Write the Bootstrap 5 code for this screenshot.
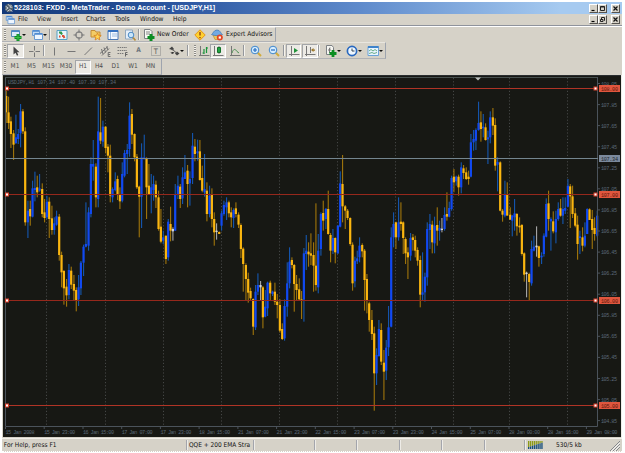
<!DOCTYPE html>
<html lang="en">
<head>
    <meta charset="UTF-8">
    <meta name="viewport" content="width=device-width, initial-scale=1.0">
    <title>MetaTrader - USDJPY,H1</title>
    <link href="https://cdn.jsdelivr.net/npm/bootstrap@5.3.0/dist/css/bootstrap.min.css" rel="stylesheet">
    <style>
        body {
            background: #fff;
            font-family: "DejaVu Sans Condensed", "DejaVu Sans", sans-serif;
            font-size: 6.6px;
            line-height: 1;
            color: #111;
        }
        .terminal {
            width: 620px;
            height: 450px;
            margin: 2px 0 0 2px;
            background: #d6d2c8;
        }
        .title-bar {
            height: 12px;
            padding: 0 2px 0 2px;
            background: linear-gradient(90deg, #123878 0%, #2c56a0 28%, #5f8bcc 58%, #a6caf0 90%);
            color: #fff;
            font: bold 7.1px/12px "Liberation Sans", sans-serif;
        }
        .menu-bar {
            height: 12px;
            padding: 0 2px 0 3px;
            border-bottom: 1px solid #8f939c;
            box-shadow: 0 1px 0 #fff;
        }
        .menu-items {
            display: grid;
            grid-template-columns: 19px 24px 25px 29px 25px 33px 20px;
            margin-left: 3px;
        }
        .win-btn {
            width: 9px;
            height: 9px;
            background: #d6d2c8;
            border: 1px solid;
            border-color: #fff #55534f #55534f #fff;
        }
        .win-btn svg { width: 7px; height: 7px; }
        .tool-row {
            display: grid;
            align-items: center;
            width: max-content;
            border-right: 1px solid #9ea4ae;
            border-bottom: 1px solid #b0b2b6;
        }
        .row-main {
            margin-top: 1px;
            height: 15px;
            grid-template-columns: 5px 21px 21px 4px 17px 17px 17px 17px 17px 5px 14px 35px 16px 18px 49px;
        }
        .row-draw {
            height: 17px;
            grid-template-columns: 5px 17px 19px 2px 17px 17px 17px 17px 17px 17px 17px 23px 5px 5px 13px 16px 17px 4px 18px 18px 3px 15px 1px 16px 4px 21px 21px 21px;
        }
        .row-period {
            height: 16px;
            grid-template-columns: 5px 16px 17px 17px 18px 16px 16px 17px 18px 17px 2px;
            color: #4c4c4c;
            text-align: center;
            font-size: 6.5px;
        }
        .row-draw, .row-main { border-top: 1px solid #e9e6df; }
        .tool-row svg { width: 12px; height: 12px; }
        .grip {
            width: 2px;
            height: 11px;
            margin-left: 2px;
            background: repeating-linear-gradient(#8c8a86 0 1px, #f4f2ec 1px 2px);
        }
        .tool-sep {
            width: 2px;
            height: 11px;
            border-left: 1px solid #94979c;
            border-right: 1px solid #f5f3ee;
        }
        .pressed {
            height: 14px;
            background: #eceae5;
            border: 1px solid;
            border-color: #a3a5a8 #fff #fff #a3a5a8;
        }
        .drop::after {
            content: "";
            border: 2px solid transparent;
            border-top-color: #111;
            border-bottom: 0;
        }
        .chart-pane { width: 619px; height: 363px; margin-left: 1px; }
        .chart-pane text { font-family: "Liberation Mono", monospace; font-size: 5.2px; }
        .status-bar {
            display: grid;
            grid-template-columns: 184px 67px 61px 42px 43px 42px 43px 40px 96px;
            height: 14px;
            border-top: 1px solid #f1efe9;
            border-bottom: 1px dotted #fff;
            font-size: 6.5px;
        }
        .pane-edge {
            height: 10px;
            border-left: 1px solid #a3a5ac;
            box-shadow: inset 1px 0 0 #eeece7;
        }
        .pane-text { padding-left: 2px; }
        .rate { margin-left: 11px; }
    </style>
</head>
<body class="overflow-hidden">
    <!-- icon set -->
    <svg class="d-none">
        <symbol id="i-app" viewBox="0 0 12 12"><circle cx="6" cy="6" r="5" fill="#52606c"/><path d="M2 4l3 2-3 2M5 1.5L7 4l2-1M4 10l3-2 3 2M7 5h3" stroke="#e8edf0" fill="none"/></symbol>
        <symbol id="i-newchart" viewBox="0 0 12 12"><path fill="#dceaf8" stroke="#568abb" d="M1.5 1.5h8v6h-8z"/><path stroke="#4b88ca" d="M2 2.5h7"/><path stroke="#0b8d22" stroke-width="3" d="M8 5v7M4.5 8.5h7"/><path stroke="#38bf48" d="M8 5.5v6M5 8.5h6"/></symbol>
        <symbol id="i-profiles" viewBox="0 0 12 12"><path fill="#c2dcf7" stroke="#6a9ad2" d="M1.5 1.5h7v5h-7z"/><path fill="#eef6ff" stroke="#6a9ad2" d="M3.5 4.5h8v6h-8z"/><path stroke="#4a86d0" stroke-width="1.500" d="M2 2h6M4 5h7"/></symbol>
        <symbol id="i-market" viewBox="0 0 12 12"><path fill="#e8f5fa" stroke="#55a0c4" d="M1 1.500h10v9H1z"/><path stroke="#2e9a4a" stroke-width="2" d="M3 3.500h2l1 2"/><path stroke="#dd5038" stroke-width="2" d="M6 7h1.500l1 2M3 7.500h1.500"/></symbol>
        <symbol id="i-navigator" viewBox="0 0 12 12"><circle cx="6" cy="6" r="3.200" fill="none" stroke="#808080" stroke-width="1.200"/><path stroke="#777" d="M6 .5v3.500M6 8v3.500M.5 6H4M8 6h3.500"/></symbol>
        <symbol id="i-favorite" viewBox="0 0 12 12"><path fill="#f3cc66" stroke="#c28b37" d="M1 1.500h4l1 1.500h4v5H1z"/><path fill="#ffd552" stroke="#d78222" stroke-width=".8" d="M7.500 4l1 2.300 2.700.2-2 1.700.7 2.800-2.400-1.500-2.400 1.500.7-2.800-2-1.700 2.700-.2z"/></symbol>
        <symbol id="i-terminal" viewBox="0 0 12 12"><path fill="#f5f9ff" stroke="#4a79b6" d="M1 1.500h10v9H1z"/><path stroke="#3571c0" stroke-width="2" d="M1 2h10"/><path stroke="#9bbbe0" d="M3.500 3v7M5 5h5M5 7h5"/></symbol>
        <symbol id="i-tester" viewBox="0 0 12 12"><path fill="#e5effa" stroke="#91a8be" d="M1.500 1h7v9h-7z"/><circle cx="7" cy="6" r="2.800" fill="#c9e5fa" stroke="#4a89c4"/><path stroke="#b38b3d" stroke-width="1.600" d="M9 8.500l2.500 3"/></symbol>
        <symbol id="i-order" viewBox="0 0 12 12"><path fill="#f8f8f4" stroke="#7d8185" d="M1.500.5H7l2 2v7H1.500z"/><path stroke="#888" d="M3 3h4M3 5h4"/><path stroke="#0b8d22" stroke-width="3" d="M8 5v7M4.500 8.500h7"/></symbol>
        <symbol id="i-warn" viewBox="0 0 12 12"><path fill="#ffd12e" stroke="#e69519" d="M6 .8L11.200 6 6 11.200.8 6z"/><path stroke="#9a4a14" stroke-width="1.500" d="M6 3v3.500M6 8v1.300"/></symbol>
        <symbol id="i-expert" viewBox="0 0 12 12"><path fill="#edc75b" stroke="#bc8e36" stroke-width=".7" d="M2 6h8l-2 4.500H4z"/><path fill="#72aae3" stroke="#3e78b6" stroke-width=".7" d="M.5 5.500C2 5 2.500 1 6 1s3.500 3.500 5.500 4.500c-3 1.500-8 1.500-11 0z"/><circle cx="8.800" cy="8.500" r="3" fill="#e24624"/><path fill="#fff" d="M7.700 7.400h2.200v2.200H7.700z"/></symbol>
        <symbol id="i-cursor" viewBox="0 0 12 12"><path fill="#444" d="M3.500 1.500v8l2-1.800 1.500 3 1.300-.7L7 7.200h2.500z"/></symbol>
        <symbol id="i-cross" viewBox="0 0 12 12"><path stroke="#777" d="M6.500 1v4.500M6.500 7.500V12M1 6.500h4.500M7.500 6.500H12"/></symbol>
        <symbol id="i-vline" viewBox="0 0 12 12"><path stroke="#777" d="M6.500 2.500v8"/></symbol>
        <symbol id="i-hline" viewBox="0 0 12 12"><path stroke="#777" d="M2.500 6.500h8"/></symbol>
        <symbol id="i-trend" viewBox="0 0 12 12"><path stroke="#777" d="M2.500 10l7.500-7.500"/></symbol>
        <symbol id="i-channel" viewBox="0 0 12 12"><path stroke="#707070" fill="none" d="M1 8.500l8-7M3 10.500l7-7M2.500 4l1.500 5M5 2.500l1.500 5M7.500 1.500L9 5M11.500 7.500H9.200v4h2.300M9.200 9.500h2"/></symbol>
        <symbol id="i-fibo" viewBox="0 0 12 12"><path stroke="#777" stroke-dasharray="1.500 .7" d="M1.500 2.500H11M1.500 5.500H11M1.500 8.500H8"/><path stroke="#666" fill="none" d="M11.500 7.500H9.500v4M9.500 9.500h2"/></symbol>
        <symbol id="i-label" viewBox="0 0 12 12"><path fill="none" stroke="#888" stroke-dasharray="1 1" d="M1.500 1.500h9v9h-9z"/></symbol>
        <symbol id="i-arrows" viewBox="0 0 12 12"><path fill="#444" d="M1 4l3-2.500L6 4 4.500 5.500 3 4.500zM7 8.500l2-2 2.500 2L9 10.500z"/><path stroke="#555" d="M4 4l4 3.500M3 7.500l1.500 1.500L6 7"/></symbol>
        <symbol id="i-bars" viewBox="0 0 12 12"><path stroke="#777" d="M2.500 1v9.500M1 10.500h10.500"/><path stroke="#19943a" stroke-width="1.200" d="M6 4v5M4.500 8H6M8.500 2v6M8.500 3H10"/></symbol>
        <symbol id="i-candles" viewBox="0 0 12 12"><path stroke="#777" d="M2.500 1v9.500M1 10.500h10.500M7 1v8"/><path fill="#22a342" stroke="#13732b" d="M5.500 2.500h3v5h-3z"/></symbol>
        <symbol id="i-line" viewBox="0 0 12 12"><path stroke="#777" d="M2.500 1v9.500M1 10.500h10.500"/><path fill="none" stroke="#4b8f53" d="M3 8c1.500-5 3.500-4 5-1.500L10 8"/></symbol>
        <symbol id="i-zoomin" viewBox="0 0 12 12"><path stroke="#d2ac3c" stroke-width="2" d="M7.500 7.500l3.500 3.500"/><circle cx="5" cy="5" r="3.800" fill="#d5edff" stroke="#3f86cc"/><path stroke="#246bc0" stroke-width="1.200" d="M3 5h4M5 3v4"/></symbol>
        <symbol id="i-zoomout" viewBox="0 0 12 12"><path stroke="#d2ac3c" stroke-width="2" d="M7.500 7.500l3.500 3.500"/><circle cx="5" cy="5" r="3.800" fill="#d5edff" stroke="#3f86cc"/><path stroke="#246bc0" stroke-width="1.200" d="M3 5h4"/></symbol>
        <symbol id="i-scroll" viewBox="0 0 12 12"><path stroke="#777" d="M3.500 1v10M1 9.500h10.500"/><path fill="#20923a" d="M6 3l4 2.500L6 8z"/></symbol>
        <symbol id="i-shift" viewBox="0 0 12 12"><path stroke="#777" d="M2.500 1v10M1 9.500h10.500M6.500 2v6"/><path fill="#9a7527" d="M7 5l2.500-2v1.500H11v1.200H9.500V7z"/></symbol>
        <symbol id="i-indicator" viewBox="0 0 12 12"><path fill="#f5f5f0" stroke="#7d8185" d="M1.500.5H7l1.500 2v7h-7z"/><path fill="none" stroke="#777" d="M5.500 3h-1v5M3 5h3"/><path stroke="#0b8d22" stroke-width="2.800" d="M8 5v7M4.500 8.500h7"/></symbol>
        <symbol id="i-clock" viewBox="0 0 12 12"><circle cx="6" cy="6" r="4.600" fill="#eff7ff" stroke="#2868bf" stroke-width="1.700"/><path fill="none" stroke="#345" d="M6 3.500V6h2.500"/></symbol>
        <symbol id="i-template" viewBox="0 0 12 12"><path fill="#e9f5ff" stroke="#6ba3d8" d="M1 1.500h10.500v9H1z"/><path stroke="#3e83cb" stroke-width="2" d="M1 2h10.500"/><path fill="none" stroke="#6aae8a" d="M2 6l2-1.500L6 6l2-1.500L10 6M2 8.500l3-1 2 1 3-1"/></symbol>
        <symbol id="i-min" viewBox="0 0 7 7"><path stroke="#000" stroke-width="1.200" d="M1.500 5.500h3"/></symbol>
        <symbol id="i-max" viewBox="0 0 7 7"><path fill="none" stroke="#222" d="M1.500 1.500h4v4h-4zM1.500 2h4"/></symbol>
        <symbol id="i-restore" viewBox="0 0 7 7"><path fill="none" stroke="#222" d="M2.500 3V1.500h3v3H5M1.500 3.500h2.500v2H1.500z"/></symbol>
        <symbol id="i-close" viewBox="0 0 7 7"><path stroke="#111" stroke-width="1.200" d="M1.500 1.500l4 4M5.500 1.500l-4 4"/></symbol>
    </svg>

    <div class="terminal d-flex flex-column">
        <div class="title-bar d-flex align-items-center">
            <svg width="10" height="10"><use href="#i-app"/></svg>
            <span class="text-nowrap" id="caption">5228103: FXDD - MetaTrader - Demo Account - [USDJPY,H1]</span>
            <div class="d-flex ms-auto">
                <span class="win-btn d-flex"><svg><use href="#i-min"/></svg></span>
                <span class="win-btn d-flex me-1"><svg><use href="#i-max"/></svg></span>
                <span class="win-btn d-flex"><svg><use href="#i-close"/></svg></span>
            </div>
        </div>

        <div class="menu-bar d-flex align-items-center">
            <svg width="10" height="10"><use href="#i-profiles"/></svg>
            <div class="menu-items">
                <span>File</span><span>View</span><span>Insert</span><span>Charts</span><span>Tools</span><span>Window</span><span>Help</span>
            </div>
            <div class="d-flex ms-auto">
                <span class="win-btn d-flex"><svg><use href="#i-min"/></svg></span>
                <span class="win-btn d-flex me-1"><svg><use href="#i-restore"/></svg></span>
                <span class="win-btn d-flex"><svg><use href="#i-close"/></svg></span>
            </div>
        </div>

        <div class="tool-row row-main">
            <i class="grip"></i>
            <span class="drop d-flex align-items-center justify-content-center"><svg><use href="#i-newchart"/></svg></span>
            <span class="drop d-flex align-items-center justify-content-center"><svg><use href="#i-profiles"/></svg></span>
            <i class="tool-sep"></i>
            <span class="d-flex justify-content-center"><svg><use href="#i-market"/></svg></span>
            <span class="d-flex justify-content-center"><svg><use href="#i-navigator"/></svg></span>
            <span class="d-flex justify-content-center"><svg><use href="#i-favorite"/></svg></span>
            <span class="d-flex justify-content-center"><svg><use href="#i-terminal"/></svg></span>
            <span class="d-flex justify-content-center"><svg><use href="#i-tester"/></svg></span>
            <i class="tool-sep"></i>
            <span class="d-flex"><svg><use href="#i-order"/></svg></span>
            <span class="text-nowrap">New Order</span>
            <span class="d-flex justify-content-center"><svg><use href="#i-warn"/></svg></span>
            <span class="d-flex justify-content-center"><svg><use href="#i-expert"/></svg></span>
            <span class="text-nowrap">Expert Advisors</span>
        </div>

        <div class="tool-row row-draw">
            <i class="grip"></i>
            <span class="pressed d-flex align-items-center justify-content-center"><svg><use href="#i-cursor"/></svg></span>
            <span class="d-flex justify-content-center"><svg><use href="#i-cross"/></svg></span>
            <i class="tool-sep"></i>
            <span class="d-flex justify-content-center"><svg><use href="#i-vline"/></svg></span>
            <span class="d-flex justify-content-center"><svg><use href="#i-hline"/></svg></span>
            <span class="d-flex justify-content-center"><svg><use href="#i-trend"/></svg></span>
            <span class="d-flex justify-content-center"><svg><use href="#i-channel"/></svg></span>
            <span class="d-flex justify-content-center"><svg><use href="#i-fibo"/></svg></span>
            <span class="text-center text-secondary fw-bold">A</span>
            <span class="d-flex justify-content-center"><svg viewBox="0 0 12 12"><use href="#i-label"/><text x="3.700" y="9" font-size="7.500" fill="#555">T</text></svg></span>
            <span class="drop d-flex align-items-center justify-content-center"><svg><use href="#i-arrows"/></svg></span>
            <i class="tool-sep"></i>
            <i class="grip"></i>
            <span class="d-flex justify-content-center"><svg><use href="#i-bars"/></svg></span>
            <span class="pressed d-flex align-items-center justify-content-center"><svg><use href="#i-candles"/></svg></span>
            <span class="d-flex justify-content-center"><svg><use href="#i-line"/></svg></span>
            <i class="tool-sep"></i>
            <span class="d-flex justify-content-center"><svg><use href="#i-zoomin"/></svg></span>
            <span class="d-flex justify-content-center"><svg><use href="#i-zoomout"/></svg></span>
            <i class="tool-sep"></i>
            <span class="pressed d-flex align-items-center justify-content-center"><svg><use href="#i-scroll"/></svg></span>
            <i></i>
            <span class="pressed d-flex align-items-center justify-content-center"><svg><use href="#i-shift"/></svg></span>
            <i class="tool-sep"></i>
            <span class="drop d-flex align-items-center justify-content-center"><svg><use href="#i-indicator"/></svg></span>
            <span class="drop d-flex align-items-center justify-content-center"><svg><use href="#i-clock"/></svg></span>
            <span class="drop d-flex align-items-center justify-content-center"><svg><use href="#i-template"/></svg></span>
        </div>

        <div class="tool-row row-period">
            <i class="grip"></i>
            <span>M1</span><span>M5</span><span>M15</span><span>M30</span>
            <span class="pressed d-flex align-items-center justify-content-center">H1</span>
            <span>H4</span><span>D1</span><span>W1</span><span>MN</span><i></i>
        </div>

        <svg class="chart-pane d-block mt-auto" id="chart" viewBox="3 75 619 363"></svg>

        <div class="status-bar align-items-center">
            <span class="text-nowrap">&nbsp;For Help, press F1</span>
            <span class="pane-edge pane-text d-flex align-items-center text-nowrap">QQE + 200 EMA Stra</span>
            <i class="pane-edge"></i><i class="pane-edge"></i><i class="pane-edge"></i><i class="pane-edge"></i><i class="pane-edge"></i><i class="pane-edge"></i>
            <span class="pane-edge d-flex align-items-center">
                <svg width="20" height="10" id="traffic"></svg>
                <span class="rate">530/5 kb</span>
                <svg class="ms-auto" width="11" height="11"><path stroke="#85878a" d="M1 11L11 1M4 11l7-7M7 11l4-4"/><path stroke="#fff" d="M2.500 11L11 2.500M5.500 11L11 5.500"/></svg>
            </span>
        </div>
    </div>

    <script src="https://cdn.jsdelivr.net/npm/bootstrap@5.3.0/dist/js/bootstrap.bundle.min.js"></script>
    <script>
        // Bars: x, high, low, body top, body bottom, kind (u = up, d = down, n = flat).
        // Units are thirds of a pixel, each block has its own left origin.
        const blocks = [
            [0, `18 50 147 66 115 d;25 68 165 115 147 d;32 128 222 142 180 d;40 168 258 178 212 d;47 122 210 190 207 u;54 165 210 180 195 u;61 90 220 112 178 u;68 105 180 112 172 d;75 160 455 172 445 d;83 380 492 410 445 u;90 380 455 405 427 d;97 320 430 343 428 u;104 293 382 342 348 u;111 305 370 340 355 d;118 300 353 343 350 u;126 328 430 345 420 d;133 375 445 415 432 d;140 365 435 383 430 u;147 370 492 383 435 d;155 395 482 433 468 d;162 430 482 448 468 u;169 410 455 427 452 u;177 420 560 428 543 d;184 533 640 543 595 d;191 588 692 591 643 d;199 615 698 638 664 d;206 570 676 588 663 u;213 578 645 590 632 d;221 603 680 630 650 d;228 640 712 648 678 d;235 603 696 640 676 u;242 561 663 566 643 u;250 512 606 518 566 u;257 385 520 510 518 u;265 400 530 415 515 u;272 250 430 270 420 u;279 198 320 270 278 u;287 268 400 278 370 d;294 68 400 172 375 u;301 72 210 175 200 d;308 140 218 158 203 u;316 157 238 158 222 d;323 210 295 218 245 d;330 212 385 245 365 d;337 340 385 345 370 u;345 295 352 322 348 u;352 305 378 315 362 d;359 340 405 360 382 d;366 265 385 300 380 u;373 228 310 237 305 u;381 210 300 228 240 u;388 85 248 125 225 u;395 105 210 120 182 d;403 178 262 180 250 d;410 240 345 248 340 d;417 335 490 338 368 d;424 208 462 250 368 u;432 182 250 250 256 u;439 250 435 252 340 d;446 270 355 335 360 d`],
            [450, `3 300 418 340 360 u;10 305 380 330 348 u;17 320 402 332 370 d;25 350 470 370 465 d;32 405 508 458 503 d;39 470 510 490 500 u;47 485 570 485 555 d;54 435 560 443 550 u;61 398 502 450 470 d;68 460 500 465 472 n;75 330 470 360 470 u;83 305 375 335 362 u;90 330 402 338 375 d;97 280 390 310 373 u;104 243 315 295 315 u;112 273 400 290 330 d;119 292 395 315 328 u;127 177 330 215 312 u;134 195 262 218 240 d;142 197 260 232 238 u;149 198 320 232 318 d;156 275 355 312 350 d;163 240 368 345 355 u;170 325 442 350 420 d;178 335 430 365 420 u;185 343 460 362 435 d;192 415 515 435 475 d;199 448 497 470 474 n;207 472 480 474 480 d;214 410 470 418 455 u;221 380 425 393 420 u;229 370 438 385 400 u;236 380 430 385 418 d;243 400 460 415 430 d;250 403 462 408 432 u;257 385 430 403 420 d;265 415 462 422 452 d;272 448 552 453 525 d;279 520 653 524 570 d;287 568 678 573 615 d;294 596 686 615 656 d;301 641 680 651 673 d;309 673 783 675 758 d;316 633 768 653 760 u;323 598 663 633 653 u;331 621 678 633 640 n;338 636 763 640 730 d;345 648 730 698 728 u;352 623 726 626 703 u;360 620 678 626 658 d;367 650 666 653 660 u;374 626 693 653 683 d;381 660 733 683 693 d;389 676 776 693 770 d;396 748 798 765 795 d;403 676 800 696 793 u;411 565 728 628 698 u;418 520 643 563 628 u;425 550 583 558 573 d;432 570 713 573 630 d;439 603 678 630 648 d;447 613 678 646 676 d;454 651 735 676 681 d;461 522 743 538 677 u;468 483 588 530 540 u;475 505 578 533 541 d`],
            [900, `32 478 573 538 545 d;40 505 653 543 575 d;47 388 650 575 633 d;54 480 658 530 640 u;62 415 545 420 525 u;69 380 470 417 440 d;77 402 465 405 435 u;84 350 482 405 480 d;91 477 565 483 530 d;98 465 540 492 530 u;105 490 568 492 535 d;113 453 540 455 538 u;120 292 460 328 458 u;127 243 445 330 397 d;135 393 465 397 410 d;142 405 438 410 432 d;150 430 515 432 510 d;157 505 650 512 628 d;164 548 640 560 622 u;171 530 570 553 562 u;178 490 565 515 550 u;186 508 550 513 532 d;193 525 710 530 618 d;200 600 718 615 680 d;207 683 773 688 738 d;215 708 798 738 780 d;222 758 1010 778 898 d;229 823 933 843 898 u;236 738 848 765 846 u;243 748 873 768 863 d;251 828 978 866 893 d;258 798 918 821 890 u;265 696 846 760 820 u;273 460 760 490 758 u;280 415 520 450 490 u;287 443 525 445 490 d;295 370 500 445 490 u;302 385 470 443 450 d;309 442 540 445 492 d;316 490 570 495 538 d;323 520 615 535 550 d;331 477 560 492 545 u;338 480 530 490 498 d;345 485 550 498 530 d;352 520 575 528 560 d;360 545 700 558 662 d;367 535 680 655 662 u;374 596 683 608 655 u;381 445 635 465 610 u;389 420 525 450 468 u;396 440 538 452 505 d;403 428 538 455 508 u;411 400 515 453 470 d;418 440 500 462 470 u;425 432 475 464 468 n;433 400 470 423 465 u;440 355 440 420 428 d;447 383 430 402 428 u`],
            [1350, `4 305 410 312 405 u;11 285 355 308 325 d;18 305 335 308 322 u;25 302 365 308 340 d;33 265 358 280 340 u;40 273 315 283 297 d;48 280 318 295 315 d;55 290 332 308 315 d;62 180 310 205 308 u;70 168 230 195 205 u;77 163 228 168 200 u;85 83 170 147 168 u;92 112 203 145 165 d;99 120 190 158 163 u;106 148 200 160 198 d;113 170 270 190 196 u;120 112 208 130 190 u;128 102 183 130 155 d;135 133 290 153 275 d;142 250 352 264 272 u;150 262 412 265 410 d;157 405 443 410 422 d;164 320 430 360 425 u;171 325 415 363 425 d;180 400 437 422 437 d;186 423 487 425 440 u;193 375 470 418 430 u;200 417 485 420 457 d;208 430 476 455 460 d;215 450 545 453 540 d;222 535 623 538 602 d;229 593 670 596 600 n;237 596 680 600 624 d;244 500 635 525 628 u;251 485 532 518 530 u;259 457 548 515 520 n;266 515 578 517 552 d;274 535 570 545 550 u;281 478 548 485 540 u;288 373 490 390 488 u;295 350 470 388 435 d;302 430 530 435 442 u;309 412 478 442 472 d;317 410 508 435 475 u;324 385 440 405 435 u;331 375 428 403 425 d;338 370 450 405 425 u;345 370 420 402 410 u;353 315 400 335 398 u;360 330 462 337 367 d;367 335 432 367 420 d;375 402 460 418 455 d;382 425 557 452 510 d;389 470 540 487 492 u;397 460 532 490 515 d;404 445 520 485 515 u;411 403 480 405 480 u;418 403 430 406 438 d;426 408 525 435 468 d;433 430 500 462 480 d;441 410 490 425 485 u`]
        ];
        const body = { u: '#1149f2', d: '#fbb610', n: '#d8d8d8' };
        const wick = { u: '#1557b0', d: '#a0760c', n: '#a8a8a8' };

        let out = '<rect x="3" y="75" width="618" height="362" fill="#171814"/>';
        out += '<path d="M3 75.500H621" stroke="#292d2f"/><path d="M5 77.500H597.500" stroke="#47504f"/>';

        // Vertical grid
        [46.5, 105.5, 163.5, 221.5, 279.5, 337.5, 395.5, 453.5, 509.5, 567.5].forEach(x => {
            out += `<path d="M${x} 78V426" stroke="#444645" stroke-dasharray="1.200 2"/>`;
        });

        // Candles
        blocks.forEach(([left, rows]) => rows.split(';').forEach(row => {
            const [x, high, low, top, bottom, kind] = row.split(' ');
            const cx = (left + Number(x)) / 3 + .2;
            const y = v => 74 + v / 3;
            out += `<rect x="${(cx - .5).toFixed(2)}" y="${y(high)}" width="1.100" height="${(low - high) / 3}" fill="${wick[kind]}"/>`;
            out += `<rect x="${(cx - 1.1).toFixed(2)}" y="${y(top)}" width="2.200" height="${Math.max(1, (bottom - top) / 3)}" fill="${body[kind]}"/>`;
        }));

        // Axes
        out += '<path d="M5.500 78V426.500H597.500V77" fill="none" stroke="#4b535b"/>';
        out += '<path d="M475 77.500h6l-3 3z" fill="#bfc1bf"/>';
        out += '<path d="M6 158.500H598" stroke="#74858f"/>';
        for (let i = 0; i < 17; i++) {
            const y = 83.5 + i * 21.07;
            out += `<path d="M598 ${y.toFixed(1)}h2" stroke="#4b535b"/>`;
            out += `<text x="601" y="${(y + 2).toFixed(1)}" textLength="16" fill="#5b6876">${(108.05 - i * .2).toFixed(2)}</text>`;
        }
        ['15 Jan 2008', '15 Jan 23:00', '16 Jan 15:00', '17 Jan 07:00', '17 Jan 23:00', '18 Jan 15:00', '21 Jan 07:00', '21 Jan 23:00',
            '22 Jan 15:00', '23 Jan 07:00', '23 Jan 23:00', '24 Jan 15:00', '25 Jan 07:00', '28 Jan 00:00', '28 Jan 16:00', '29 Jan 08:00'].forEach((t, i) => {
            const x = 5.5 + i * 38.73;
            out += `<path d="M${x.toFixed(1)} 427v2" stroke="#4b535b"/>`;
            out += `<text x="${x.toFixed(1)}" y="434" textLength="${i ? 31 : 29}" fill="#5b6876">${t}</text>`;
        });

        // Price levels
        [[88.5, '108.00', '#b03426'], [194.5, '107.00', '#96281c'], [300.5, '106.00', '#96281c'], [405.5, '105.00', '#b03426']].forEach(([y, t, c]) => {
            out += `<path d="M6 ${y}H598" stroke="${c}"/>`;
            [7, 595.5].forEach(x => {
                out += `<rect x="${x - 1.5}" y="${y - 1.5}" width="3" height="3" fill="#fff" stroke="#d8402c"/>`;
            });
            out += `<rect x="599" y="${y - 3.5}" width="21" height="7" fill="#e0563e"/><text x="601" y="${y + 2}" textLength="17" fill="#5c160c">${t}</text>`;
        });
        out += '<rect x="599" y="155" width="21" height="7" fill="#7c8a9c"/><text x="601" y="160.500" textLength="17" fill="#20262e">107.34</text>';
        out += '<text x="8" y="84" textLength="108" fill="#5b6876">USDJPY,H1  107.34 107.40 107.30 107.34</text>';
        out += '<path d="M621.500 75V438" stroke="#efede8"/>';
        document.getElementById('chart').innerHTML = out;

        // Connection bars
        let bars = '';
        for (let i = 0; i < 8; i++) {
            const h = 2 + i * .6;
            bars += `<rect x="${3 + i * 1.9}" y="1" width="1.300" height="${8 - h}" fill="#8c9a18"/><rect x="${3 + i * 1.9}" y="${9 - h}" width="1.300" height="${h}" fill="#164d7c"/>`;
        }
        document.getElementById('traffic').innerHTML = bars;
    </script>
</body>
</html>
